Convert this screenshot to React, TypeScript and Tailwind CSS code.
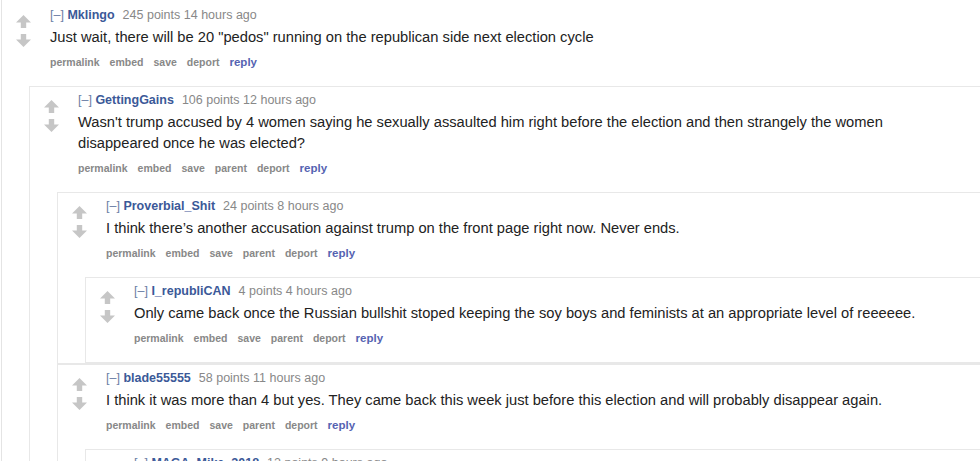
type CommentData = {
  user: string;
  points: string;
  age: string;
  body: string;
  hasParent?: boolean;
  replies?: CommentData[];
};

const thread: CommentData = {
  user: "Mklingo",
  points: "245 points",
  age: "14 hours ago",
  body: 'Just wait, there will be 20 "pedos" running on the republican side next election cycle',
  replies: [
    {
      user: "GettingGains",
      points: "106 points",
      age: "12 hours ago",
      body: "Wasn't trump accused by 4 women saying he sexually assaulted him right before the election and then strangely the women disappeared once he was elected?",
      hasParent: true,
      replies: [
        {
          user: "Proverbial_Shit",
          points: "24 points",
          age: "8 hours ago",
          body: "I think there’s another accusation against trump on the front page right now. Never ends.",
          hasParent: true,
          replies: [
            {
              user: "I_republiCAN",
              points: "4 points",
              age: "4 hours ago",
              body: "Only came back once the Russian bullshit stoped keeping the soy boys and feminists at an appropriate level of reeeeee.",
              hasParent: true,
            },
          ],
        },
        {
          user: "blade55555",
          points: "58 points",
          age: "11 hours ago",
          body: "I think it was more than 4 but yes. They came back this week just before this election and will probably disappear again.",
          hasParent: true,
          replies: [
            {
              user: "MAGA_Mike_2018",
              points: "12 points",
              age: "9 hours ago",
              body: "...",
              hasParent: true,
            },
          ],
        },
      ],
    },
  ],
};

const Arrow = ({ down }: { down?: boolean }) => (
  <svg width="15" height="13" viewBox="0 0 15 13" className={down ? "rotate-180" : ""}>
    <path d="M7.5 0 L15 7.5 L10.2 7.5 L10.2 13 L4.8 13 L4.8 7.5 L0 7.5 Z" fill="#c6c6c6" />
  </svg>
);

const Comment = ({ c, top }: { c: CommentData; top?: boolean }) => {
  const actions = ["permalink", "embed", "save"];
  if (c.hasParent) actions.push("parent");
  actions.push("deport");

  return (
    <div
      className={
        top
          ? "ml-[1px] border-l border-[#e4e4e4]"
          : "border-l border-t border-b border-[#e8e8e8]"
      }
    >
      <div className={top ? "flex pt-[7px] pb-[17px]" : "flex pt-[5px] pb-[17px]"}>
        <div className="flex w-[48px] shrink-0 flex-col gap-[6px] pl-[14px] pt-[8px]">
          <Arrow />
          <Arrow down />
        </div>
        <div className="max-w-[840px]">
          <div className="flex items-baseline gap-[8px] text-[12.5px] leading-[16px] text-[#888]">
            <span>
              <span className="text-[#6b7ea6]">[–]</span>{" "}
              <span className="font-bold text-[#3b5998]">{c.user}</span>
            </span>
            <span>
              {c.points} {c.age}
            </span>
          </div>
          <p className="mt-[4px] text-[14.7px] leading-[21px] text-[#222]">{c.body}</p>
          <div className="mt-[7px] flex items-baseline gap-[10px] text-[10.5px] font-bold leading-[14px] text-[#888]">
            {actions.map((a) => (
              <span key={a}>{a}</span>
            ))}
            <span className="text-[11.5px] text-[#5563b2]">reply</span>
          </div>
        </div>
      </div>
      {c.replies && (
        <div className="pl-[27px]">
          {c.replies.map((r) => (
            <Comment key={r.user} c={r} />
          ))}
        </div>
      )}
    </div>
  );
};

export default function App() {
  return (
    <div
      className="h-[461px] w-[980px] overflow-hidden bg-white"
      style={{ fontFamily: '"Liberation Sans", Arial, Helvetica, sans-serif' }}
    >
      <Comment c={thread} top />
    </div>
  );
}
